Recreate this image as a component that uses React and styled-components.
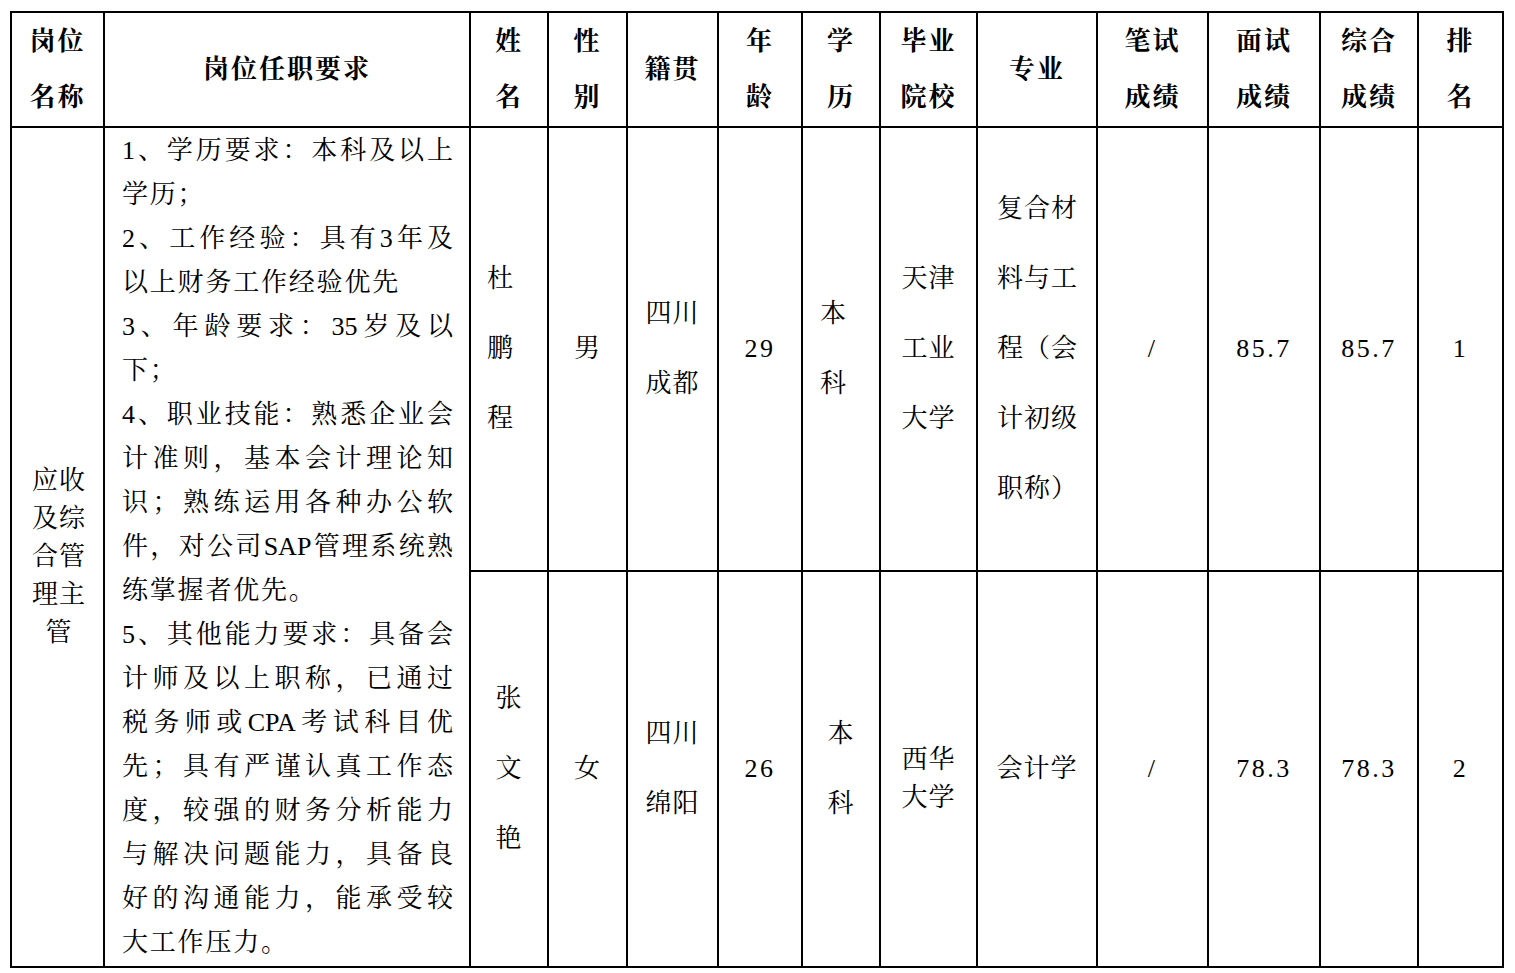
import React from 'react';
import styled, { createGlobalStyle } from 'styled-components';

const GlobalStyle = createGlobalStyle`
  html, body { margin: 0; padding: 0; background: #ffffff; }
`;

const FONT = `"Liberation Serif", "Noto Serif CJK SC", "Noto Sans CJK SC", serif`;

const Page = styled.div`
  padding: 11px 0 0 10px;
  background: #ffffff;
`;

const Table = styled.table`
  border-collapse: collapse;
  table-layout: fixed;
  width: 1492px;
  font-family: ${FONT};
  font-size: 26px;
  color: #000000;
`;

const HeadRow = styled.tr`
  height: 115px;
`;

const BodyRow = styled.tr`
  height: ${(p) => p.$h}px;
`;

const HeadCell = styled.th`
  border: 2px solid #000;
  padding: 0;
  font-weight: 700;
  line-height: 56px;
  letter-spacing: 2px;
  text-align: center;
  vertical-align: middle;
`;

const TitleCell = styled.td`
  border: 2px solid #000;
  padding: 20px 0 0 3px;
  line-height: 38px;
  letter-spacing: 1px;
  text-align: center;
  vertical-align: middle;
`;

const ReqCell = styled.td`
  border: 2px solid #000;
  padding: 0 16px 0 17px;
  vertical-align: middle;
`;

const ReqLine = styled.span`
  display: block;
  height: 44px;
  line-height: 44px;
  white-space: nowrap;
  text-align: justify;
  text-align-last: ${(p) => (p.$full ? 'justify' : 'left')};
  text-justify: inter-character;
  letter-spacing: ${(p) => (p.$full ? '0' : '1.8px')};
`;

const Cell = styled.td`
  border: 2px solid #000;
  padding: ${(p) => p.$pt || 0}px 0 0 ${(p) => p.$pl || 0}px;
  line-height: ${(p) => p.$lh || 44}px;
  letter-spacing: ${(p) => (p.$num ? '2.5px' : '1px')};
  text-align: ${(p) => p.$align || 'center'};
  vertical-align: middle;
  white-space: nowrap;
`;

const Col = styled.col`
  width: ${(p) => p.$w}px;
`;

const widths = [93, 366, 78, 79, 91, 84, 78, 97, 120, 111, 112, 98, 85];

const headers = [
  ['岗位', '名称'],
  ['岗位任职要求'],
  ['姓', '名'],
  ['性', '别'],
  ['籍贯'],
  ['年', '龄'],
  ['学', '历'],
  ['毕业', '院校'],
  ['专业'],
  ['笔试', '成绩'],
  ['面试', '成绩'],
  ['综合', '成绩'],
  ['排', '名'],
];

const requirements = [
  ['1、学历要求：本科及以上', true],
  ['学历；', false],
  ['2、工作经验：具有3年及', true],
  ['以上财务工作经验优先', false],
  ['3、年龄要求：35岁及以', true],
  ['下；', false],
  ['4、职业技能：熟悉企业会', true],
  ['计准则，基本会计理论知', true],
  ['识；熟练运用各种办公软', true],
  ['件，对公司SAP管理系统熟', true],
  ['练掌握者优先。', false],
  ['5、其他能力要求：具备会', true],
  ['计师及以上职称，已通过', true],
  ['税务师或CPA考试科目优', true],
  ['先；具有严谨认真工作态', true],
  ['度，较强的财务分析能力', true],
  ['与解决问题能力，具备良', true],
  ['好的沟通能力，能承受较', true],
  ['大工作压力。', false],
];

const candidates = [
  {
    h: 444,
    name: { lines: ['杜', '鹏', '程'], align: 'left', pl: 16 },
    gender: '男',
    origin: ['四川', '成都'],
    age: '29',
    edu: { lines: ['本', '科'], align: 'left', pl: 17 },
    school: { lines: ['天津', '工业', '大学'], lh: 70 },
    major: { lines: ['复合材', '料与工', '程（会', '计初级', '职称）'], lh: 70, align: 'left', pl: 19 },
    written: '/',
    interview: '85.7',
    total: '85.7',
    rank: '1',
  },
  {
    h: 396,
    name: { lines: ['张', '文', '艳'] },
    gender: '女',
    origin: ['四川', '绵阳'],
    age: '26',
    edu: { lines: ['本', '科'] },
    school: { lines: ['西华', '大学'], lh: 38, pt: 20 },
    major: { lines: ['会计学'], lh: 44 },
    written: '/',
    interview: '78.3',
    total: '78.3',
    rank: '2',
  },
];

function Lines({ lines }) {
  return lines.map((l, i) => (
    <React.Fragment key={i}>
      {i > 0 && <br />}
      {l}
    </React.Fragment>
  ));
}

function CandidateCells({ c }) {
  return (
    <>
      <Cell $lh={70} $align={c.name.align} $pl={c.name.pl}>
        <Lines lines={c.name.lines} />
      </Cell>
      <Cell>{c.gender}</Cell>
      <Cell $lh={70}>
        <Lines lines={c.origin} />
      </Cell>
      <Cell $num>{c.age}</Cell>
      <Cell $lh={70} $align={c.edu.align} $pl={c.edu.pl}>
        <Lines lines={c.edu.lines} />
      </Cell>
      <Cell $lh={c.school.lh} $pt={c.school.pt}>
        <Lines lines={c.school.lines} />
      </Cell>
      <Cell $lh={c.major.lh} $align={c.major.align} $pl={c.major.pl}>
        <Lines lines={c.major.lines} />
      </Cell>
      <Cell $num>{c.written}</Cell>
      <Cell $num>{c.interview}</Cell>
      <Cell $num>{c.total}</Cell>
      <Cell $num>{c.rank}</Cell>
    </>
  );
}

export default function App() {
  return (
    <Page>
      <GlobalStyle />
      <Table>
        <colgroup>
          {widths.map((w, i) => (
            <Col key={i} $w={w} />
          ))}
        </colgroup>
        <thead>
          <HeadRow>
            {headers.map((h, i) => (
              <HeadCell key={i}>
                <Lines lines={h} />
              </HeadCell>
            ))}
          </HeadRow>
        </thead>
        <tbody>
          <BodyRow $h={candidates[0].h}>
            <TitleCell rowSpan={2}>
              <Lines lines={['应收', '及综', '合管', '理主', '管']} />
            </TitleCell>
            <ReqCell rowSpan={2}>
              {requirements.map(([t, full], i) => (
                <ReqLine key={i} $full={full}>
                  {t}
                </ReqLine>
              ))}
            </ReqCell>
            <CandidateCells c={candidates[0]} />
          </BodyRow>
          <BodyRow $h={candidates[1].h}>
            <CandidateCells c={candidates[1]} />
          </BodyRow>
        </tbody>
      </Table>
    </Page>
  );
}
